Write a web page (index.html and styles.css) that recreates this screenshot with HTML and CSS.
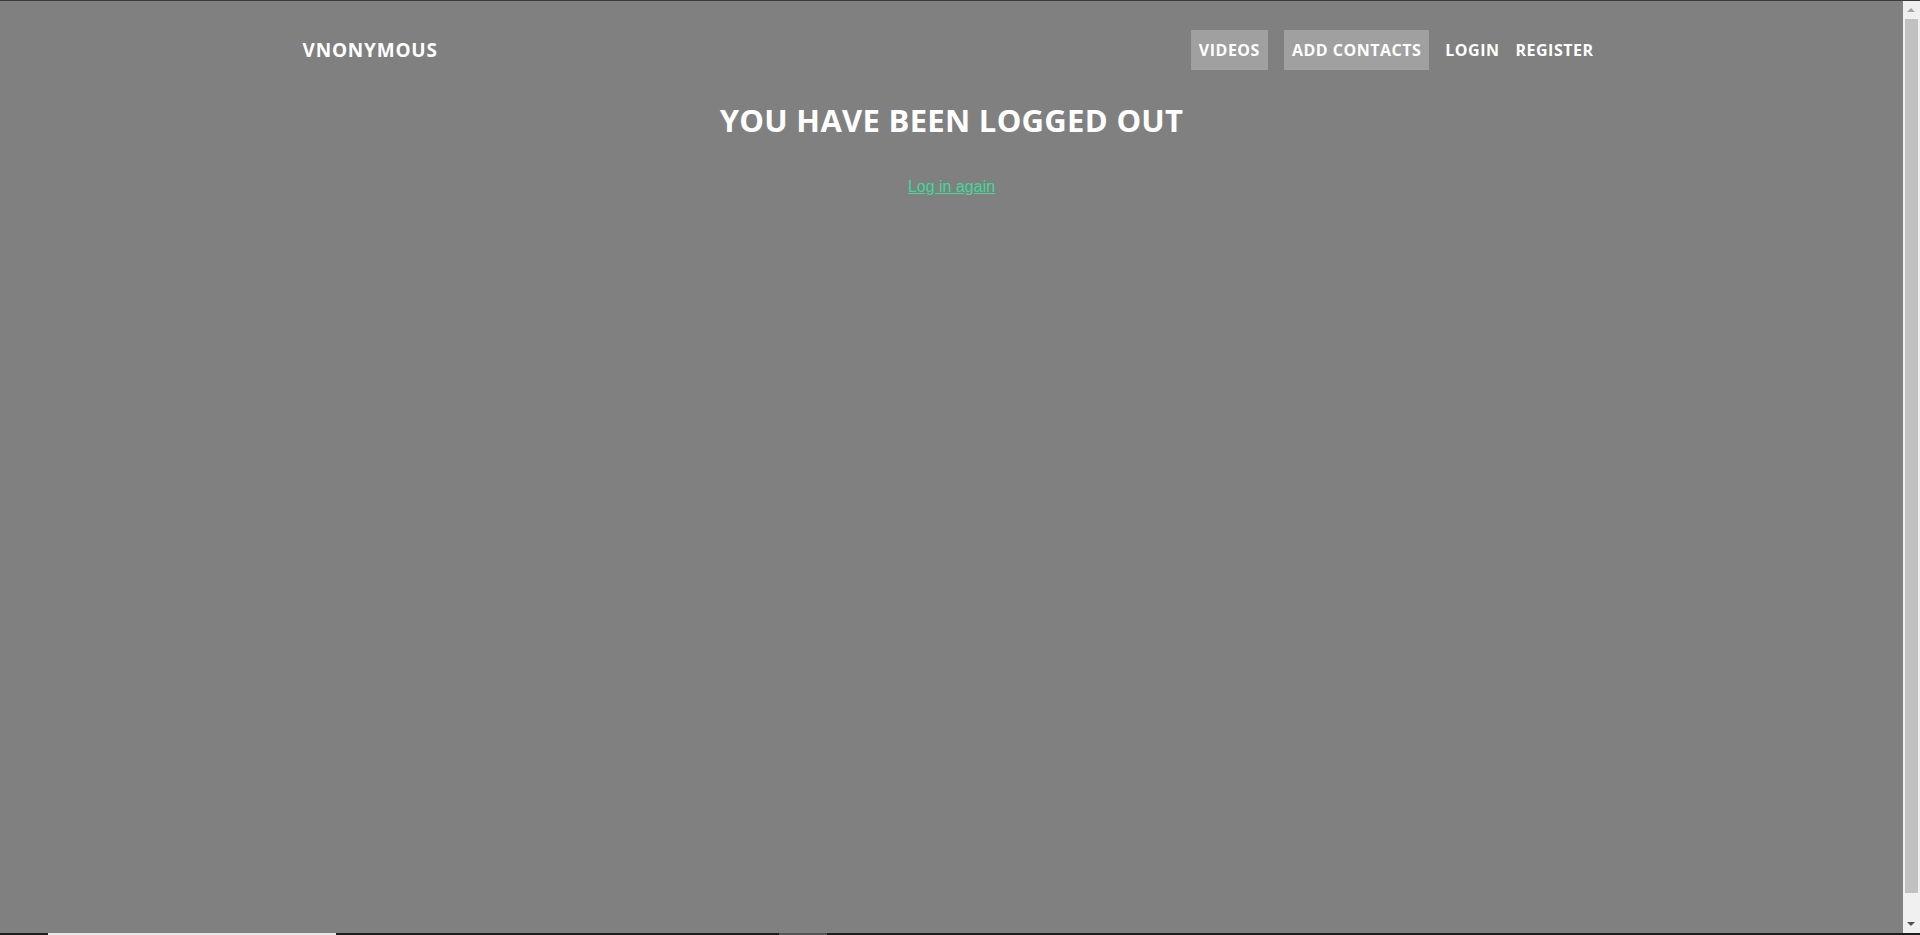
FILE: index.html
```html
<!DOCTYPE html>
<html lang="en">
<head>
<meta charset="utf-8">
<title>Logged out</title>
<link rel="stylesheet" href="styles.css">
</head>
<body>
<div class="page">
  <header class="topbar">
    <a class="brand" href="#">VNONYMOUS</a>
    <nav class="menu">
      <a class="menu-link boxed" href="#">VIDEOS</a>
      <a class="menu-link boxed" href="#">ADD CONTACTS</a>
      <a class="menu-link plain-first" href="#">LOGIN</a>
      <a class="menu-link" href="#">REGISTER</a>
    </nav>
  </header>
  <main class="content">
    <h1 class="title">YOU HAVE BEEN LOGGED OUT</h1>
    <p class="again"><a href="#">Log in again</a></p>
  </main>
</div>
<div class="scrollbar">
  <span class="arrow up"></span>
  <span class="thumb"></span>
  <span class="arrow down"></span>
</div>
<div class="edge-top"></div>
<div class="edge-bottom"><span class="seg-a"></span><span class="seg-b"></span></div>
</body>
</html>
```
FILE: styles.css
```css
html, body {
  margin: 0;
  padding: 0;
}
body {
  background: #808080;
  font-family: "Open Sans", "DejaVu Sans", sans-serif;
  color: #fff;
  overflow: hidden;
}
.page {
  margin-right: 17px;
}
.topbar {
  width: 1300px;
  margin: 0 auto;
  padding-top: 30px;
  display: flex;
  justify-content: space-between;
  align-items: center;
}
.brand {
  color: #fff;
  text-decoration: none;
  font-weight: 700;
  font-size: 19px;
  letter-spacing: 0.8px;
  margin-left: 1px;
}
.menu {
  display: flex;
  align-items: center;
}
.menu-link {
  color: #fff;
  text-decoration: none;
  font-weight: 700;
  font-size: 16px;
  letter-spacing: 0.5px;
  line-height: 40px;
  padding: 0 8px;
}
.menu-link.boxed {
  background: #a0a0a0;
  margin-right: 16px;
}
.menu-link.plain-first {
  margin-left: -8px;
}
.content {
  text-align: center;
}
.title {
  margin: 28px 0 0;
  font-size: 31px;
  font-weight: 700;
  letter-spacing: 0.3px;
  line-height: 44px;
}
.again {
  margin: 36px 0 0;
  font-family: "Liberation Sans", Arial, sans-serif;
  font-size: 16px;
}
.again a {
  color: #40d89a;
}
.scrollbar {
  position: fixed;
  top: 0;
  right: 0;
  bottom: 0;
  width: 17px;
  background: #f0f0f0;
}
.thumb {
  position: absolute;
  left: 2px;
  right: 2px;
  top: 19px;
  bottom: 42px;
  background: #c1c1c1;
}
.arrow {
  position: absolute;
  left: 4px;
  width: 0;
  height: 0;
  border-left: 4.5px solid transparent;
  border-right: 4.5px solid transparent;
}
.arrow.up {
  top: 8px;
  border-bottom: 4px solid #a3a3a3;
}
.arrow.down {
  bottom: 9px;
  border-top: 4px solid #505050;
}
.edge-top {
  position: fixed;
  top: 0;
  left: 0;
  right: 0;
  height: 1px;
  background: #3a3a3a;
}
.edge-bottom {
  position: fixed;
  bottom: 0;
  left: 0;
  right: 0;
  height: 2px;
  background: #1e1e1e;
}
.seg-a {
  position: absolute;
  left: 48px;
  width: 288px;
  top: 0;
  bottom: 0;
  background: #e8e8e8;
}
.seg-b {
  position: absolute;
  left: 779px;
  width: 48px;
  top: 0;
  bottom: 0;
  background: #555;
}
```
